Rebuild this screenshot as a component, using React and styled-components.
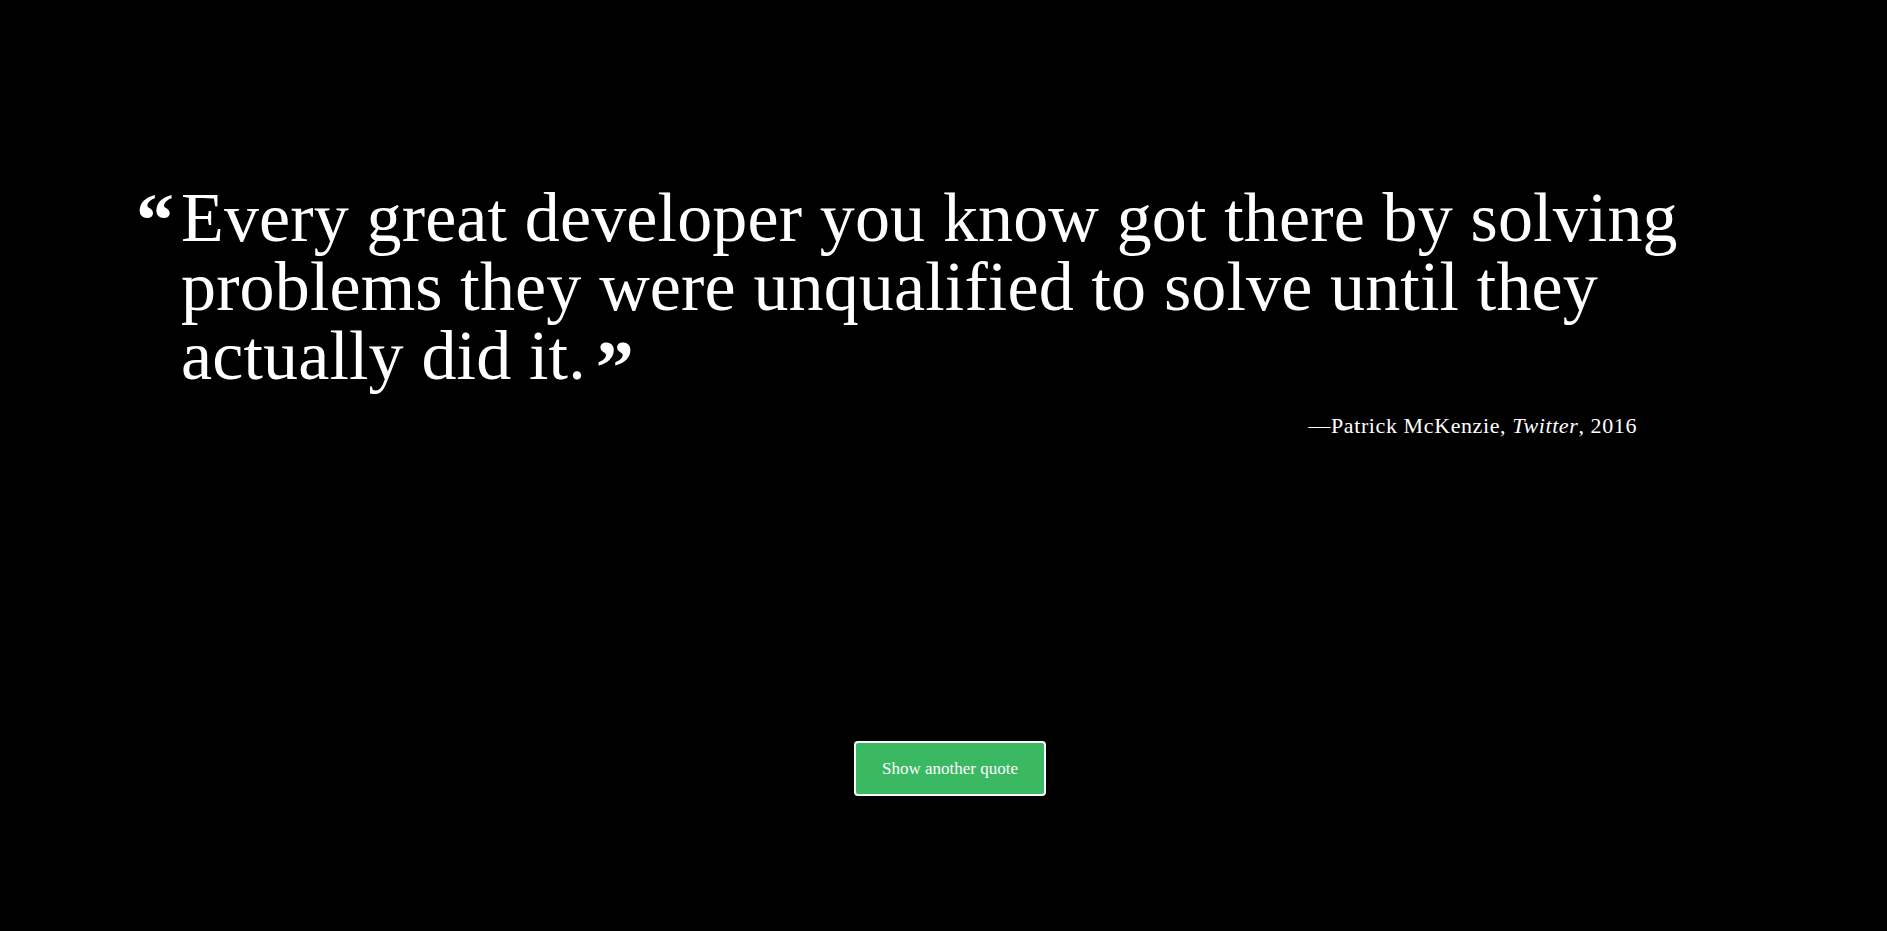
import React from "react";
import styled, { createGlobalStyle } from "styled-components";

const GlobalStyle = createGlobalStyle`
  html, body {
    margin: 0;
    padding: 0;
    background: #000;
  }

  body {
    font-family: "Liberation Serif", "Times New Roman", serif;
    color: #fff;
  }
`;

const Page = styled.main`
  display: flex;
  flex-direction: column;
  min-height: 100vh;
  background: #000;
`;

const Quote = styled.figure`
  display: flex;
  flex-direction: column;
  align-self: flex-start;
  margin: 0;
  padding: 183px 0 0 136px;
`;

const QuoteRow = styled.blockquote`
  display: flex;
  align-items: flex-start;
  gap: 7px;
  margin: 0;
`;

const Mark = styled.span`
  font-weight: bold;
  font-size: 76px;
  line-height: ${(p) => (p.$close ? "0" : "1")};
  position: relative;
  top: ${(p) => (p.$close ? "14px" : "-1px")};
  margin-left: ${(p) => (p.$close ? "10px" : "0")};
`;

const Text = styled.p`
  margin: 0;
  width: 1510px;
  font-size: 70px;
  line-height: 69px;
  font-weight: normal;
  letter-spacing: 0.15px;
`;

const Source = styled.figcaption`
  align-self: flex-end;
  margin: 23px 54px 0 0;
  font-size: 22px;
  letter-spacing: 0.6px;

  cite {
    font-style: italic;
  }
`;

const Actions = styled.div`
  display: flex;
  justify-content: center;
  padding: 0 0 0 13px;
  margin-top: 302px;
`;

const Button = styled.button`
  width: 192px;
  height: 55px;
  border: 2px solid #fff;
  border-radius: 4px;
  background: #3bb862;
  color: #fff;
  font-family: "Liberation Serif", "Times New Roman", serif;
  font-size: 17px;
  cursor: pointer;
`;

export default () => (
  <Page>
    <GlobalStyle />
    <Quote>
      <QuoteRow>
        <Mark>“</Mark>
        <Text>
          Every great developer you know got there by solving problems they
          were unqualified to solve until they actually did it.
          <Mark $close>”</Mark>
        </Text>
      </QuoteRow>
      <Source>
        —Patrick McKenzie, <cite>Twitter</cite>, 2016
      </Source>
    </Quote>
    <Actions>
      <Button>Show another quote</Button>
    </Actions>
  </Page>
);
